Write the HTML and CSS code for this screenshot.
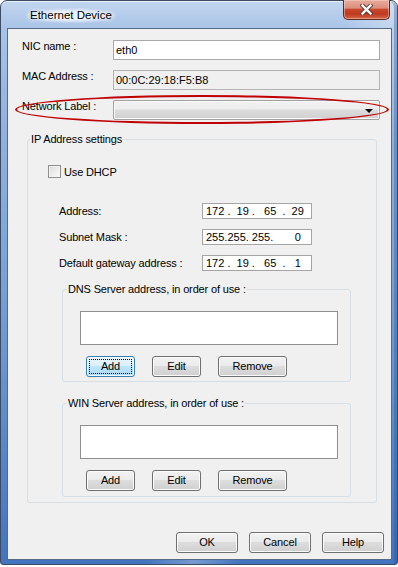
FILE: index.html
```html
<!DOCTYPE html>
<html>
<head>
<meta charset="utf-8">
<link rel="stylesheet" href="styles.css">
</head>
<body>
<div class="window">
  <div class="titlebar">
    <span class="title">Ethernet Device</span>
    <button class="close" aria-label="Close">
      <svg width="13" height="11" viewBox="0 0 13 11">
        <path d="M2.5 1.5 L10.5 9.5 M10.5 1.5 L2.5 9.5" stroke="#5a3a36" stroke-width="4.2" stroke-linecap="square" fill="none"/>
        <path d="M2.5 1.5 L10.5 9.5 M10.5 1.5 L2.5 9.5" stroke="#ffffff" stroke-width="2.4" stroke-linecap="square" fill="none"/>
      </svg>
    </button>
  </div>
  <div class="client">
    <div class="form">
      <label class="lbl">NIC name :</label>
      <div class="textbox">eth0</div>
      <label class="lbl">MAC Address :</label>
      <div class="textbox readonly">00:0C:29:18:F5:B8</div>
      <label class="lbl">Network Label :</label>
      <div class="combo"><span class="arrow"></span></div>
    </div>
    <div class="mark"></div>

    <fieldset class="group ip">
      <legend>IP Address settings</legend>
      <div class="check-row">
        <span class="checkbox"></span>
        <span>Use DHCP</span>
      </div>
      <div class="ip-grid">
        <span class="ip-lbl">Address:</span>
        <div class="ipbox">172 .  19 .   65  .  29</div>
        <span class="ip-lbl">Subnet Mask :</span>
        <div class="ipbox">255.255. 255.       0</div>
        <span class="ip-lbl">Default gateway address :</span>
        <div class="ipbox">172 .  19 .   65  .   1</div>
      </div>

      <fieldset class="group sub dns">
        <legend>DNS Server address, in order of use :</legend>
        <div class="listbox"></div>
        <div class="btn-row">
          <button class="btn w49 focus">Add</button>
          <button class="btn w49">Edit</button>
          <button class="btn w69">Remove</button>
        </div>
      </fieldset>

      <fieldset class="group sub win">
        <legend>WIN Server address, in order of use :</legend>
        <div class="listbox"></div>
        <div class="btn-row">
          <button class="btn w49">Add</button>
          <button class="btn w49">Edit</button>
          <button class="btn w69">Remove</button>
        </div>
      </fieldset>
    </fieldset>

    <div class="dialog-buttons">
      <button class="btn w62">OK</button>
      <button class="btn w62">Cancel</button>
      <button class="btn w62">Help</button>
    </div>
  </div>
</div>
</body>
</html>
```

FILE: styles.css
```css
html, body {
  margin: 0;
  padding: 0;
  background: #ffffff;
}

body {
  font-family: "Liberation Sans", Arial, sans-serif;
  font-size: 11px;
  color: #000;
  letter-spacing: -0.15px;
}

.window {
  box-sizing: border-box;
  width: 398px;
  height: 565px;
  border: 1px solid #3a4b63;
  border-radius: 7px 7px 3px 3px;
  padding: 0 5px 4px 6px;
  display: flex;
  flex-direction: column;
  background:
    linear-gradient(110deg, rgba(255,255,255,0) 58%, rgba(255,255,255,0.28) 66%, rgba(255,255,255,0) 74%),
    linear-gradient(180deg, #c2d6ef 0px, #a8c3e7 28px, #92b3df 120px, #7aa1d7 280px, #5b8acb 430px, #4273bf 565px);
  box-shadow: inset 0 1px 0 rgba(255,255,255,0.6), inset -3px 0 0 rgba(40,80,150,0.35);
}

.titlebar {
  height: 27px;
  display: flex;
  align-items: flex-start;
  flex-shrink: 0;
}

.title {
  margin: 7px 0 0 19px;
  font-size: 11.5px;
  line-height: 15px;
  letter-spacing: 0;
  padding: 0 4px;
  background: radial-gradient(ellipse at center, rgba(235,243,252,0.95) 35%, rgba(220,233,248,0) 75%);
  text-shadow: 0 0 6px #fff, 0 0 4px #fff;
}

.close {
  margin: -1px 2px 0 auto;
  width: 47px;
  height: 20px;
  padding: 0;
  border: 1px solid #5c2b25;
  border-top: none;
  border-radius: 0 0 5px 5px;
  background: linear-gradient(180deg, #e7ab9d 0%, #dc8f7b 42%, #c8482e 50%, #bf3a1f 72%, #d26546 100%);
  box-shadow: inset 0 0 0 1px rgba(255,220,210,0.45);
  display: flex;
  align-items: center;
  justify-content: center;
}

.close svg { display: block; }

.client {
  position: relative;
  flex: 1;
  border: 1px solid #566a85;
  background: #f0f0f0;
  display: flex;
  flex-direction: column;
  padding-bottom: 6px;
}

.form {
  display: grid;
  grid-template-columns: 91px 267px;
  grid-auto-rows: 20px;
  row-gap: 10px;
  margin: 11px 0 0 14px;
}

.lbl {
  line-height: 13px;
  align-self: start;
}

.textbox {
  box-sizing: border-box;
  height: 20px;
  border: 1px solid #a9a9a9;
  background: #fff;
  padding: 0 0 0 2px;
  line-height: 18px;
  letter-spacing: 0;
}

.textbox.readonly {
  background: #f0f0f0;
  border-color: #b4b4b4;
}

.combo {
  box-sizing: border-box;
  height: 20px;
  border: 1px solid #a2a2a2;
  border-radius: 2px;
  background: linear-gradient(180deg, #f2f2f2 0%, #ececec 45%, #dcdcdc 50%, #d0d0d0 100%);
  box-shadow: inset 0 0 0 1px #fafafa;
  display: flex;
  align-items: center;
  justify-content: flex-end;
  padding-right: 6px;
}

.arrow {
  width: 0;
  height: 0;
  border-left: 4px solid transparent;
  border-right: 4px solid transparent;
  border-top: 4px solid #000;
  margin-top: 1px;
}

.mark {
  position: absolute;
  left: 7px;
  top: 66px;
  width: 374px;
  height: 29px;
  box-sizing: border-box;
  border: 2px solid #c00000;
  border-radius: 50%;
  pointer-events: none;
}

.group {
  box-sizing: border-box;
  margin: 0;
  padding: 0;
  border: 1px solid #d5dfe5;
  border-radius: 3px;
  min-width: 0;
}

.group > legend {
  line-height: 14px;
  padding: 0 1px;
}

.ip {
  margin: 12px 0 0 19px;
  width: 350px;
  padding-bottom: 5px;
}

.ip > legend {
  margin-left: 2px;
}

.check-row {
  display: flex;
  align-items: center;
  height: 13px;
  margin-top: 19px;
  padding-left: 20px;
  gap: 3px;
}

.checkbox {
  box-sizing: border-box;
  width: 13px;
  height: 13px;
  border: 1px solid #8e8f8f;
  background: linear-gradient(135deg, #dcdcdc 0%, #ececec 50%, #fbfbfb 100%);
  box-shadow: inset 0 0 0 1px #f4f4f4;
}

.ip-grid {
  display: grid;
  grid-template-columns: 143px 110px;
  grid-auto-rows: 16px;
  row-gap: 10px;
  margin: 25px 0 0 31px;
  align-items: center;
}

.ip-lbl {
  line-height: 13px;
}

.ipbox {
  box-sizing: border-box;
  height: 16px;
  border: 1px solid #a5a5a5;
  background: #fff;
  padding-left: 3px;
  line-height: 14px;
  white-space: pre;
  letter-spacing: 0;
}

.sub {
  width: 289px;
  margin: 0 0 0 34px;
}

.sub > legend {
  margin-left: 4px;
}

.dns {
  margin-top: 11px;
  padding-bottom: 4px;
}

.win {
  margin-top: 14px;
  padding-bottom: 5px;
}

.listbox {
  box-sizing: border-box;
  width: 258px;
  height: 34px;
  margin: 15px 0 0 17px;
  border: 1px solid #8e8f8f;
  background: #fff;
}

.btn-row {
  display: flex;
  gap: 17px;
  margin: 11px 0 0 23px;
}

.btn {
  box-sizing: border-box;
  height: 21px;
  border: 1px solid #707070;
  border-radius: 3px;
  background: linear-gradient(180deg, #f2f2f2 0%, #ebebeb 46%, #dddddd 50%, #cfcfcf 100%);
  box-shadow: inset 0 0 0 1px #fbfbfb;
  font-family: inherit;
  font-size: 11px;
  letter-spacing: -0.15px;
  color: #000;
  padding: 0;
  display: flex;
  align-items: center;
  justify-content: center;
  line-height: 13px;
}

.btn.focus {
  position: relative;
  border-color: #3c7fb1;
  background: linear-gradient(180deg, #eaf6fd 0%, #d9f0fc 46%, #bee6fd 50%, #a7d9f5 100%);
  box-shadow: inset 0 0 0 1px #f0f8fe;
}

.btn.focus::after {
  content: "";
  position: absolute;
  left: 2px;
  top: 2px;
  right: 2px;
  bottom: 2px;
  border: 1px dotted #000;
}

.w49 { width: 49px; }
.w69 { width: 69px; }
.w62 { width: 62px; }

.dialog-buttons {
  margin-top: auto;
  display: flex;
  justify-content: flex-end;
  gap: 11px;
  padding-right: 7px;
}
```
